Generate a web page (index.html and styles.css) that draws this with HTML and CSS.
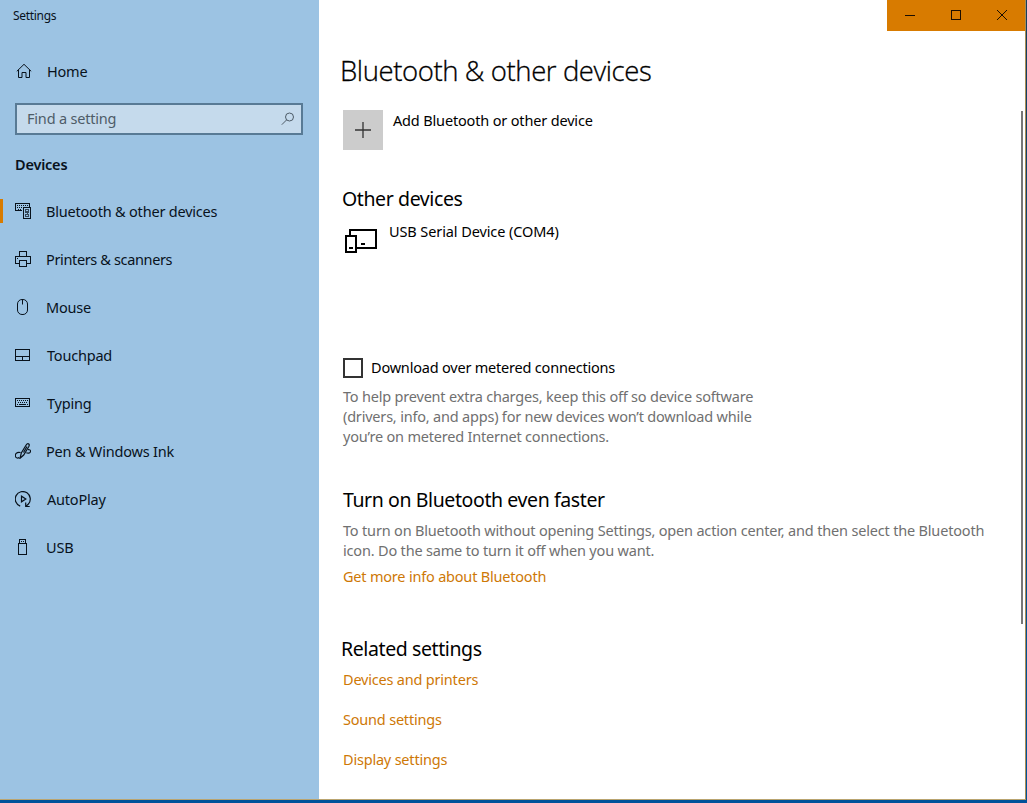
FILE: index.html
```html
<!DOCTYPE html>
<html lang="en">
<head>
<meta charset="utf-8">
<title>Settings</title>
<link rel="stylesheet" href="styles.css">
</head>
<body>
<div class="window">
  <aside class="sidebar">
    <div class="app-title">Settings</div>
    <a class="nav-item home">
      <svg class="icon" viewBox="0 0 16 16"><path d="M.8 8.300 8 1.300l7.200 7M2.500 6.800v7.700h3.500v-5h4v5h3.500V6.800"/></svg>
      <span>Home</span>
    </a>
    <div class="search">
      <span>Find a setting</span>
      <svg class="search-icon" viewBox="0 0 14 14"><circle cx="8.500" cy="5" r="4"/><path d="M5.700 7.800.8 12.700"/></svg>
    </div>
    <h2 class="section">Devices</h2>
    <nav>
      <a class="nav-item active">
        <svg class="icon crisp" viewBox="0 0 16 16"><path d="M6.500 7.500h-6v-7h14v3M8.500 4.500h7v11h-7z"/><path stroke-dasharray="1 1" d="M2 2.500h11M2 4.500h5M3 6.500h4"/><path d="M10.500 6.500h3v3h-3zM11 8.500h2M12 9v2M10.500 11.500h3v2h-3z" opacity=".7"/></svg>
        <span>Bluetooth &amp; other devices</span>
      </a>
      <a class="nav-item tight">
        <svg class="icon crisp" viewBox="0 0 16 16"><path d="M4.500 5.500v-5h7v5M4.500 12.500h-4v-7h15v7h-4M4.500 9.500h7v6h-7zM2 7.500h1"/></svg>
        <span>Printers &amp; scanners</span>
      </a>
      <a class="nav-item">
        <svg class="icon" viewBox="0 0 16 16"><rect x="2.500" y=".5" width="10" height="15" rx="4.500"/><path d="M7.500.5v5"/></svg>
        <span>Mouse</span>
      </a>
      <a class="nav-item inset">
        <svg class="icon crisp" viewBox="0 0 16 16"><path d="M.5 2.500h14v11H.5zM.5 9.500h14M7.500 9.500v4"/></svg>
        <span>Touchpad</span>
      </a>
      <a class="nav-item inset">
        <svg class="icon crisp" viewBox="0 0 16 16"><path d="M.5 3.500h14v8H.5z"/><path stroke-dasharray="1 1" d="M2 5.500h12M3 7.500h10"/><path d="M2 9.500h1M4 9.500h7M12 9.500h1"/></svg>
        <span>Typing</span>
      </a>
      <a class="nav-item">
        <svg class="icon bold" viewBox="0 0 16 16"><path d="M5 15.300 6.300 10 11 2.200Q12.500-.2 14 1.200q.6.900-.3 2.500L8.700 12zM8.500 9.500l3.500-6M5.500 9.500C1.500 8.500-.3 11.500.6 13.700c.7 1.500 2.300 1.800 3.600.8M11.300 9.800c1.700.8 3.900.4 4.200-1.200.2-1.600-1-2.300-2.500-2"/></svg>
        <span>Pen &amp; Windows Ink</span>
      </a>
      <a class="nav-item inset">
        <svg class="icon bold" viewBox="0 0 16 16"><path d="M5.200 15.100A7.500 7.500 0 1 1 13.400 13L11.200 15.200M10.700 11.500v4h4M6.500 5.200v5.600l4.300-2.800z"/></svg>
        <span>AutoPlay</span>
      </a>
      <a class="nav-item">
        <svg class="icon crisp" viewBox="0 0 16 16"><path d="M3.500 4.500h8v11h-8zM4.500 4.500v-4h6v4M6 2.500h1M8 2.500h1"/></svg>
        <span>USB</span>
      </a>
    </nav>
  </aside>
  <main class="content">
    <div class="caption">
      <span class="cap-btn"><svg viewBox="0 0 10 10"><path d="M0 5.500h10"/></svg></span>
      <span class="cap-btn"><svg viewBox="0 0 10 10"><path d="M.5.5h9v9h-9z"/></svg></span>
      <span class="cap-btn"><svg class="smooth" viewBox="0 0 10 10"><path d="m0 0 10 10M10 0 0 10"/></svg></span>
    </div>
    <div class="scrollbar"></div>
    <h1 class="title">Bluetooth &amp; other devices</h1>
    <div class="add">
      <span class="plus"><svg viewBox="0 0 16 16"><path d="M8 0v16M0 8h16"/></svg></span>
      <span>Add Bluetooth or other device</span>
    </div>
    <h2 class="heading other">Other devices</h2>
    <div class="device">
      <svg class="device-icon" viewBox="0 0 32 24"><path d="M5 6V1h26v18H12M1 7h10v16H1zM4 19h4M16 15h4"/></svg>
      <span>USB Serial Device (COM4)</span>
    </div>
    <label class="metered"><span class="box"></span><span class="box-label">Download over metered connections</span></label>
    <p class="note">To help prevent extra charges, keep this off so device software<br>(drivers, info, and apps) for new devices won’t download while<br>you’re on metered Internet connections.</p>
    <h2 class="heading faster">Turn on Bluetooth even faster</h2>
    <p class="note tip">To turn on Bluetooth without opening Settings, open action center, and then select the Bluetooth<br>icon. Do the same to turn it off when you want.</p>
    <a class="link info">Get more info about Bluetooth</a>
    <h2 class="heading related">Related settings</h2>
    <div class="links">
      <a class="link">Devices and printers</a>
      <a class="link">Sound settings</a>
      <a class="link">Display settings</a>
    </div>
  </main>
</div>
</body>
</html>
```
FILE: styles.css
```css
* { box-sizing: border-box; }
body {
  margin: 0;
  width: 1027px;
  height: 803px;
  overflow: hidden;
  background: linear-gradient(#173d5c, #00529a 90%);
  font-family: "Noto Sans", "Open Sans", sans-serif;
  font-size: 14.5px;
  line-height: 20px;
  letter-spacing: -0.2px;
  color: #000;
  white-space: nowrap;
}
h1, h2, p { margin: 0; font-weight: 400; }
svg { fill: none; stroke: currentColor; flex: none; }
.window {
  display: flex;
  width: 1026px;
  height: 800px;
  border-right: 1px solid #a98e54;
  border-bottom: 1px solid #b9a470;
}
.sidebar { width: 319px; background: #9cc3e3; color: #08121c; }
.app-title { height: 48px; padding: 6px 13px; font-size: 12px; letter-spacing: -0.3px; }
.nav-item { position: relative; display: flex; align-items: center; height: 48px; padding-left: 15px; }
.nav-item .icon { width: 16px; height: 16px; margin-right: 15px; }
.inset .icon { margin-right: 16px; }
.home { padding-bottom: 2px; }
.home .icon { margin-left: 1px; }
.tight { letter-spacing: -0.36px; }
.crisp { shape-rendering: crispEdges; }
.bold { stroke-width: 1.2; }
.active::before { content: ""; position: absolute; left: 0; top: 12px; width: 3px; height: 24px; background: #d87b00; }
.search {
  display: flex;
  align-items: center;
  justify-content: space-between;
  height: 32px;
  margin: 7px 16px 0 15px;
  padding: 0 6px 2px 10px;
  border: 2px solid #587a95;
  background: #c5daec;
  color: #4e5c68;
}
.search-icon { width: 14px; height: 14px; margin-top: 2px; }
.section { height: 52px; padding: 19px 15px 0; font-size: 14.5px; font-weight: 600; }
.content { position: relative; flex: 1; padding-left: 24px; background: #fff; }
.caption { display: flex; width: 138px; height: 31px; margin-left: auto; background: #d87b00; }
.cap-btn { display: flex; align-items: center; justify-content: center; width: 46px; padding-bottom: 1px; color: #1c0e00; }
.cap-btn svg { width: 10px; height: 10px; shape-rendering: crispEdges; }
.cap-btn .smooth { shape-rendering: auto; }
.scrollbar { position: absolute; right: 2px; top: 111px; width: 2px; height: 513px; background: #777; }
.title {
  height: 79px;
  margin-left: -3px;
  padding-top: 20px;
  font-family: "Open Sans", sans-serif;
  font-weight: 300;
  font-size: 27.5px;
  line-height: 40px;
  letter-spacing: -0.4px;
  -webkit-text-stroke: 0.3px #000;
}
.add { display: flex; height: 77px; letter-spacing: -0.16px; }
.plus { display: flex; align-items: center; justify-content: center; width: 40px; height: 40px; margin-right: 10px; background: #ccc; color: #333; }
.plus svg { width: 16px; height: 16px; stroke-width: 1.3; }
.heading { margin-left: -1px; font-size: 19.5px; line-height: 24px; letter-spacing: -0.4px; }
.device { display: flex; height: 147px; padding: 10px 0 0 2px; letter-spacing: -0.1px; }
.device-icon { width: 32px; height: 24px; margin: 8px 12px 0 0; stroke-width: 2; }
.metered { display: flex; align-items: center; height: 20px; }
.box { width: 20px; height: 20px; margin-right: 8px; border: 2px solid #333; }
.box-label { padding-bottom: 2px; }
.note { margin-top: 8px; color: #707070; }
.faster { margin: 42px 0 0; }
.link { color: #ce7806; }
.tip { margin-top: 8px; letter-spacing: -0.18px; }
.info { display: block; margin-top: 6px; }
.related { margin: 51px 0 0 -2px; }
.links { display: flex; flex-direction: column; gap: 20px; margin-top: 8px; }
```
